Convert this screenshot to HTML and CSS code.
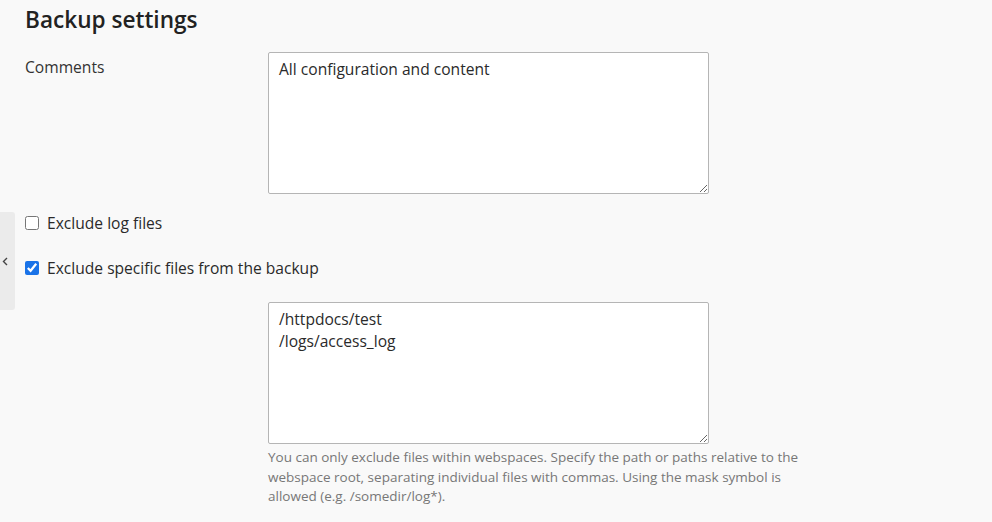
FILE: index.html
```html
<!DOCTYPE html>
<html lang="en">
<head>
    <meta charset="UTF-8">
    <title>Backup settings</title>
    <link rel="stylesheet" href="styles.css">
</head>
<body>
    <div class="side-tab">
        <svg width="6" height="9" viewBox="0 0 6 9"><path d="M5 1 L1.5 4.5 L5 8" fill="none" stroke="#444" stroke-width="1.4"/></svg>
    </div>
    <div class="page">
        <h1>Backup settings</h1>

        <div class="row">
            <label class="row-label" for="comments">Comments</label>
            <textarea id="comments" class="field">All configuration and content</textarea>
        </div>

        <label class="check">
            <input type="checkbox">
            <span>Exclude log files</span>
        </label>

        <label class="check">
            <input type="checkbox" checked>
            <span>Exclude specific files from the backup</span>
        </label>

        <div class="row">
            <div class="row-label"></div>
            <div>
                <textarea class="field paths" spellcheck="true">/httpdocs/test
/logs/access_log</textarea>
                <p class="hint">You can only exclude files within webspaces. Specify the path or paths relative to the webspace root, separating individual files with commas. Using the mask symbol is allowed (e.g. /somedir/log*).</p>
            </div>
        </div>
    </div>
</body>
</html>
```

FILE: styles.css
```css
body {
    background-color: #f9f9f9;
    font-family: "Open Sans", Arial, sans-serif;
    color: #222;
    margin: 0;
    padding: 0;
}

.page {
    padding: 0 0 0 25px;
}

h1 {
    font-size: 22.6px;
    font-weight: 600;
    margin: 0;
    padding-top: 4px;
    line-height: 32px;
}

.row {
    display: grid;
    grid-template-columns: 243px 441px;
}

.row:first-of-type {
    margin-top: 16px;
}

.row-label {
    font-size: 15.6px;
    color: #333;
    padding-top: 4px;
    line-height: 22px;
}

.field {
    box-sizing: border-box;
    width: 441px;
    height: 142px;
    margin: 0;
    padding: 5px 10px;
    border: 1px solid #b5b5b5;
    border-radius: 2px;
    background: #fff;
    font-family: "Open Sans", Arial, sans-serif;
    font-size: 15.6px;
    line-height: 22px;
    color: #2a2a2a;
    display: block;
}

.check {
    display: flex;
    align-items: center;
    gap: 8px;
    font-size: 15.6px;
    line-height: 22px;
    color: #2a2a2a;
    height: 22px;
}

.check input {
    width: 14px;
    height: 14px;
    margin: 0;
    accent-color: #1a73e8;
}

.check:first-of-type,
.row + .check {
    margin-top: 18px;
}

.check + .check {
    margin-top: 23px;
}

.check + .row {
    margin-top: 23px;
}

.hint {
    margin: 4px 0 0;
    font-size: 13.5px;
    line-height: 19.5px;
    color: #777;
    width: 550px;
}

.side-tab {
    position: absolute;
    left: 0;
    top: 212px;
    width: 15px;
    height: 98px;
    background: #ebebeb;
    border-radius: 0 3px 3px 0;
    display: flex;
    align-items: center;
    padding-left: 2px;
    box-sizing: border-box;
}
```
